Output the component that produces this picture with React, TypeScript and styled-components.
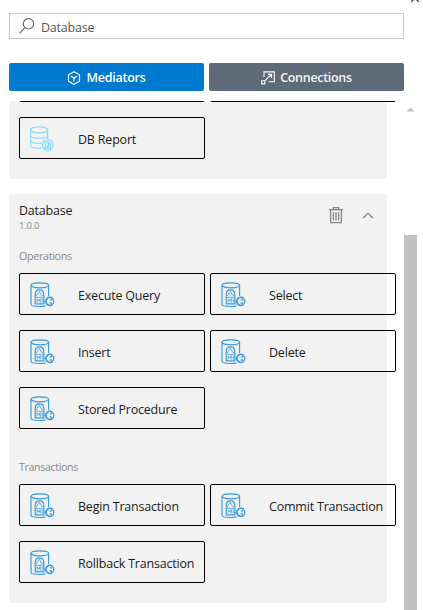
import React from 'react';
import styled, { createGlobalStyle } from 'styled-components';

const GlobalStyle = createGlobalStyle`
  * { box-sizing: border-box; }
  body { margin: 0; background: #fff; overflow: hidden; }
`;

const Page = styled.main`
  position: relative;
  width: 423px;
  height: 610px;
  overflow: hidden;
  display: flex;
  flex-direction: column;
  padding: 13px 0 0 9px;
  background: #fff;
  font-family: 'Open Sans', 'Noto Sans', sans-serif;
`;

const CloseMark = styled.svg`
  position: absolute;
  top: -6px;
  left: 411px;
`;

const SearchBox = styled.label`
  display: flex;
  align-items: center;
  flex: none;
  width: 395px;
  height: 26px;
  border: 1px solid #c8c8c8;
  padding-left: 9px;
  gap: 6px;
`;

const Text = styled.span<{ $size?: number; $color?: string; $track?: number; $weight?: number }>`
  font-size: ${p => p.$size ?? 12.5}px;
  font-weight: ${p => p.$weight ?? 400};
  color: ${p => p.$color ?? '#1c1c1c'};
  letter-spacing: ${p => p.$track ?? -0.2}px;
  line-height: 16px;
  white-space: nowrap;
`;

const SearchText = styled(Text)`
  padding-top: 3px;
`;

const Tabs = styled.nav`
  display: flex;
  flex: none;
  gap: 5px;
  margin-top: 24px;
`;

const Tab = styled.button<{ $active?: boolean }>`
  display: flex;
  align-items: center;
  justify-content: center;
  gap: 5px;
  width: 195px;
  height: 28px;
  padding: 1px 0 0;
  border: 0;
  border-radius: 2px;
  font-family: inherit;
  background: ${p => (p.$active ? '#007acf' : '#5f6a78')};
`;

const Body = styled.div`
  display: flex;
  margin-top: 10px;
  height: 509px;
  overflow: hidden;
`;

const Palette = styled.div`
  width: 395px;
  flex: none;
`;

const Panel = styled.section`
  width: 378px;
  padding: 0 10px 20px;
  background: #f2f2f2;
  border-radius: 2px;
  margin-bottom: 15px;
`;

const Grid = styled.div<{ $clipped?: boolean }>`
  display: grid;
  grid-template-columns: 186px 186px;
  grid-auto-rows: 42px;
  gap: 15px 5px;
  ${p => p.$clipped && 'transform: translateY(-41px); margin-bottom: -41px;'}
`;

const Item = styled.div`
  display: flex;
  align-items: center;
  gap: 22px;
  padding: 2px 0 0 10px;
  border: 1px solid #000;
  border-radius: 2px;
`;

const ItemName = styled(Text)`
  padding-top: 2px;
`;

const Header = styled.header`
  display: flex;
  justify-content: space-between;
  height: 54px;
  padding-top: 9px;
`;

const Titles = styled.div`
  display: flex;
  flex-direction: column;
`;

const Version = styled(Text)`
  line-height: 13px;
`;

const Actions = styled.div`
  display: flex;
  align-items: flex-start;
  gap: 19px;
  padding: 3px 3px 0 0;
`;

const GroupLabel = styled.div<{ $spaced?: boolean }>`
  display: flex;
  height: 25px;
  margin-top: ${p => (p.$spaced ? 30 : 0)}px;
`;

const ScrollBar = styled.div`
  display: flex;
  flex-direction: column;
  align-items: center;
  width: 13px;
`;

const Thumb = styled.div`
  width: 13px;
  flex: 1;
  margin-top: 122px;
  background: #c1c1c1;
`;

const DbIcon = () => (
  <svg width="26" height="28" viewBox="0 0 26 28" fill="none" stroke="#3a9bdc" strokeWidth="1.15">
    <ellipse cx="9.8" cy="4.3" rx="8.8" ry="2.5" />
    <path d="M1 4.3v19c0 1.3 3.7 2.2 8.4 2.2 2.4 0 4.6-.2 6.2-.8M18.6 4.3v10.9" />
    <path d="M5.2 22.8v-9.1c0-3 1.7-4.8 4.3-4.8s4.3 1.8 4.3 4.8v9.1z" />
    <path d="m6.2 15 2.2-3.7 1.2-1 1.2 3.1 2.3 1.5M5.4 16.3h8M7.1 21.5v-3.7l2 2.3 1.1-2.5v3.9m2-4v4" strokeWidth=".8" />
    <path d="M22.6 17.5a4 4 0 1 0 0 5.8" strokeWidth="1.8" />
    <path d="M19.7 18.8h2.2M19.7 22h2.2M22.5 17.7c1.7 1.2 1.7 4.3 0 5.5M14.3 20.4h2" strokeWidth="1.3" />
  </svg>
);

const ReportIcon = () => (
  <svg width="26" height="28" viewBox="0 0 26 28" fill="none" stroke="#8cdcfa" strokeWidth="1.25">
    <ellipse cx="9" cy="4.8" rx="8.6" ry="3" />
    <path d="M.6 5v5.4c0 1.6 3.7 2.8 8.4 2.8s8.6-1.2 8.6-2.8V5M.6 10.4v5.2c0 1.6 3.7 2.7 8.4 2.7 1.4 0 2.5-.1 3.4-.3M.6 15.6v4.8c0 1.6 3.7 2.8 8.4 2.8h2.5M17.6 10.4v4" />
    <circle cx="17.7" cy="20.1" r="5.4" />
    <path d="M15 16.8h3.5l2 2v4.6H15zM18.2 16.8V19h2.2M16.5 20.8h2.6M16.5 22.2h2.6" />
  </svg>
);

const OPERATIONS = ['Execute Query', 'Select', 'Insert', 'Delete', 'Stored Procedure'];
const TRANSACTIONS = ['Begin Transaction', 'Commit Transaction', 'Rollback Transaction'];

const Entries = ({ names }: { names: string[] }) => (
  <Grid>
    {names.map(name => (
      <Item key={name}>
        <DbIcon />
        <ItemName>{name}</ItemName>
      </Item>
    ))}
  </Grid>
);

export default function App() {
  return (
    <>
      <GlobalStyle />
      <Page>
        <CloseMark width="8" height="8" viewBox="0 0 8 8" stroke="#333" strokeWidth="1.2">
          <path d="m0 0 8 8M8 0 0 8" />
        </CloseMark>
        <SearchBox>
          <svg width="16" height="18" viewBox="0 0 16 18" fill="none" stroke="#666" strokeWidth="1.1">
            <circle cx="9.5" cy="6.8" r="5.2" />
            <path d="m5.8 10.6-5.2 5.8" />
          </svg>
          <SearchText $color="#555">Database</SearchText>
        </SearchBox>
        <Tabs>
          <Tab $active>
            <svg width="14" height="14" viewBox="0 0 14 14" fill="none" stroke="#fff" strokeWidth="1.2">
              <path d="m7 .8 5.5 3v6.4L7 13.2l-5.5-3V3.8z" />
              <path d="m4 5.4 3 1.5 3-1.5M7 6.9v3.5" />
            </svg>
            <Text $color="#fff" $weight={600} $track={-0.25}>Mediators</Text>
          </Tab>
          <Tab>
            <svg width="14" height="14" viewBox="0 0 14 14" fill="none" stroke="#fff" strokeWidth="1.1">
              <path d="M3 6V.9h10.3v9.8H7.5M.7 9.8h3.1v3.1H.7zM3.8 9.8l6.5-6.3M6.8 3.4h3.7v3.7" />
            </svg>
            <Text $color="#f4f5f6" $weight={600} $track={-0.3}>Connections</Text>
          </Tab>
        </Tabs>
        <Body>
          <Palette>
            <Panel>
              <Grid $clipped>
                <Item />
                <Item />
                <Item>
                  <ReportIcon />
                  <ItemName>DB Report</ItemName>
                </Item>
              </Grid>
            </Panel>
            <Panel>
              <Header>
                <Titles>
                  <Text>Database</Text>
                  <Version $size={9.5} $color="#888">1.0.0</Version>
                </Titles>
                <Actions>
                  <svg width="14" height="18" viewBox="0 0 14 18" fill="none" stroke="#858585" strokeWidth="1.3">
                    <path d="M0 3.6h14M4.4 3.4V1.6h5.2v1.8M1.6 4v12.6h10.8V4M4.4 6.2v8.2M7 6.2v8.2M9.6 6.2v8.2" />
                  </svg>
                  <svg width="12" height="18" viewBox="0 0 12 18" fill="none" stroke="#777" strokeWidth="1.1">
                    <path d="m1.2 12 4.8-4.8 4.8 4.8" />
                  </svg>
                </Actions>
              </Header>
              <GroupLabel><Text $size={10.7} $color="#888" $track={-0.3}>Operations</Text></GroupLabel>
              <Entries names={OPERATIONS} />
              <GroupLabel $spaced><Text $size={10.7} $color="#888" $track={-0.38}>Transactions</Text></GroupLabel>
              <Entries names={TRANSACTIONS} />
            </Panel>
          </Palette>
          <ScrollBar>
            <svg width="13" height="12" viewBox="0 0 13 12"><path d="m6.5 6.5 4 4h-8z" fill="#c1c1c1" /></svg>
            <Thumb />
          </ScrollBar>
        </Body>
      </Page>
    </>
  );
}
